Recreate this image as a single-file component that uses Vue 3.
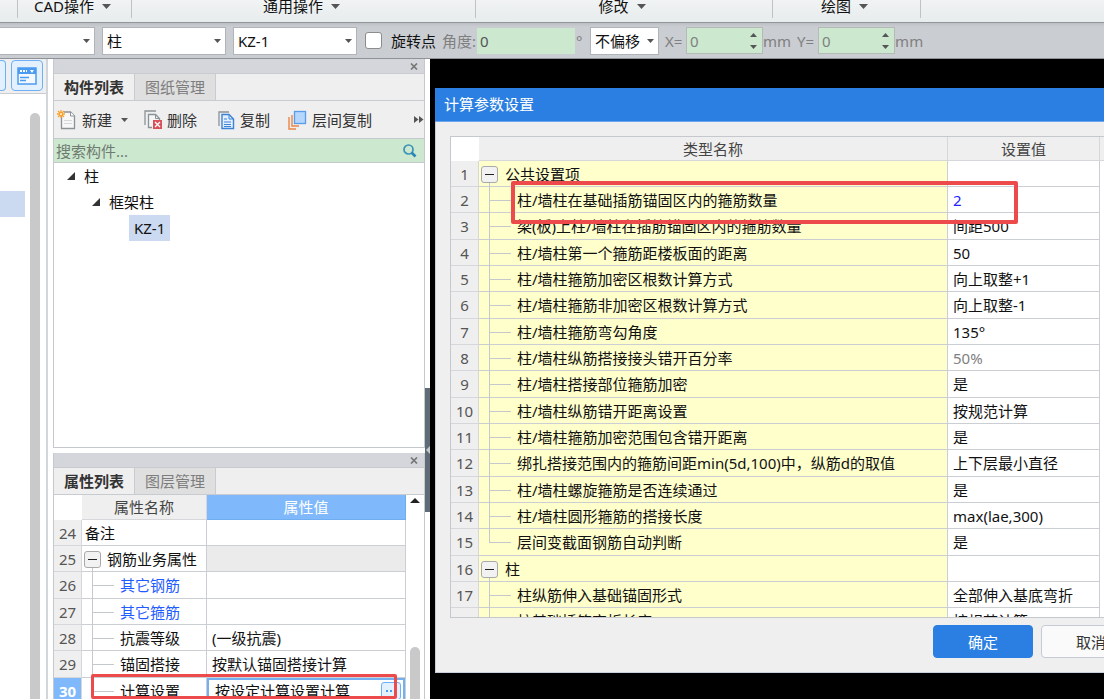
<script setup>
import { ref } from 'vue'

const groups = [
  { label: 'CAD操作', size: 'g-cad' },
  { label: '通用操作', size: 'g-common' },
  { label: '修改', size: 'g-edit' },
  { label: '绘图', size: 'g-draw' }
]

const rotate = ref(false)
const angle = ref('0')
const offsetX = ref('0')
const offsetY = ref('0')
const keyword = ref('')

const properties = [
  { no: 24, name: '备注', kind: 'plain', value: '' },
  { no: 25, name: '钢筋业务属性', kind: 'parent', value: '' },
  { no: 26, name: '其它钢筋', kind: 'child', link: true, value: '' },
  { no: 27, name: '其它箍筋', kind: 'child', link: true, value: '' },
  { no: 28, name: '抗震等级', kind: 'child', value: '(一级抗震)' },
  { no: 29, name: '锚固搭接', kind: 'child', value: '按默认锚固搭接计算' },
  { no: 30, name: '计算设置', kind: 'child', value: '按设定计算设置计算', selected: true }
]

const params = [
  { name: '公共设置项', kind: 'parent', value: '' },
  { name: '柱/墙柱在基础插筋锚固区内的箍筋数量', kind: 'child', value: '2', tone: 'changed' },
  { name: '梁(板)上柱/墙柱在插筋锚固区内的箍筋数量', kind: 'child', value: '间距500' },
  { name: '柱/墙柱第一个箍筋距楼板面的距离', kind: 'child', value: '50' },
  { name: '柱/墙柱箍筋加密区根数计算方式', kind: 'child', value: '向上取整+1' },
  { name: '柱/墙柱箍筋非加密区根数计算方式', kind: 'child', value: '向上取整-1' },
  { name: '柱/墙柱箍筋弯勾角度', kind: 'child', value: '135°' },
  { name: '柱/墙柱纵筋搭接接头错开百分率', kind: 'child', value: '50%', tone: 'muted' },
  { name: '柱/墙柱搭接部位箍筋加密', kind: 'child', value: '是' },
  { name: '柱/墙柱纵筋错开距离设置', kind: 'child', value: '按规范计算' },
  { name: '柱/墙柱箍筋加密范围包含错开距离', kind: 'child', value: '是' },
  { name: '绑扎搭接范围内的箍筋间距min(5d,100)中，纵筋d的取值', kind: 'child', value: '上下层最小直径' },
  { name: '柱/墙柱螺旋箍筋是否连续通过', kind: 'child', value: '是' },
  { name: '柱/墙柱圆形箍筋的搭接长度', kind: 'child', value: 'max(lae,300)' },
  { name: '层间变截面钢筋自动判断', kind: 'child', last: true, value: '是' },
  { name: '柱', kind: 'parent', value: '' },
  { name: '柱纵筋伸入基础锚固形式', kind: 'child', value: '全部伸入基底弯折' },
  { name: '柱基础插筋弯折长度', kind: 'child', value: '按规范计算' }
]
</script>

<template>
  <div class="app">
    <header class="ribbon">
      <div v-for="g in groups" :key="g.label" class="group" :class="g.size">
        <button type="button">
          {{ g.label }}
          <svg width="9" height="5" viewBox="0 0 9 5"><path d="M0 0h9L4.500 5z" fill="#555" /></svg>
        </button>
      </div>
    </header>

    <div class="options">
      <span class="select s-floor">
        <select aria-label="楼层"><option></option></select>
        <svg width="7" height="4" viewBox="0 0 7 4"><path d="M0 0h7L3.500 4z" fill="#555" /></svg>
      </span>
      <span class="select s-type">
        <select aria-label="构件类型"><option>柱</option></select>
        <svg width="7" height="4" viewBox="0 0 7 4"><path d="M0 0h7L3.500 4z" fill="#555" /></svg>
      </span>
      <span class="select s-type">
        <select aria-label="构件"><option>KZ-1</option></select>
        <svg width="7" height="4" viewBox="0 0 7 4"><path d="M0 0h7L3.500 4z" fill="#555" /></svg>
      </span>
      <label class="check"><input v-model="rotate" type="checkbox" />旋转点</label>
      <label class="field" for="angle">角度:</label>
      <input id="angle" v-model="angle" class="angle" type="text" />
      <span class="degree">°</span>
      <span class="select s-offset">
        <select aria-label="偏移方式"><option>不偏移</option></select>
        <svg width="7" height="4" viewBox="0 0 7 4"><path d="M0 0h7L3.500 4z" fill="#555" /></svg>
      </span>
      <label class="field x" for="ox">X=</label>
      <span class="spin">
        <input id="ox" v-model="offsetX" type="text" />
        <svg width="7" height="16" viewBox="0 0 7 16"><path d="M0 4h7L3.500 0zM0 12h7L3.500 16z" fill="#555" /></svg>
      </span>
      <span class="unit">mm</span>
      <label class="field y" for="oy">Y=</label>
      <span class="spin">
        <input id="oy" v-model="offsetY" type="text" />
        <svg width="7" height="16" viewBox="0 0 7 16"><path d="M0 4h7L3.500 0zM0 12h7L3.500 16z" fill="#555" /></svg>
      </span>
      <span class="unit">mm</span>
    </div>

    <main class="work">
      <aside class="strip">
        <div class="strip-tools">
          <button type="button" class="view-btn cut" aria-label="列表视图"></button>
          <button type="button" class="view-btn" aria-label="窗口视图">
            <svg width="20" height="18" viewBox="0 0 20 18">
              <rect x="1" y="1" width="18" height="16" fill="#f4f9ff" stroke="#4b9bf0" stroke-width="1.500" />
              <rect x="1" y="1" width="18" height="6" fill="#4b9bf0" />
              <path d="M3 3h2v2H3zM6 3h2v2H6zM9 3h1v2H9zM13 3h4l-2 3z" fill="#fff" />
              <path d="M3 10.500h9M3 13.500h6" stroke="#4b9bf0" stroke-width="1.500" />
            </svg>
          </button>
        </div>
        <div class="strip-body">
          <div class="strip-mark"></div>
          <div class="strip-scroll"></div>
        </div>
      </aside>

      <div class="docks">
        <section class="dock dock-list">
          <div class="dock-bar">
            <button type="button" aria-label="关闭">
              <svg width="8" height="7" viewBox="0 0 8 7"><path d="M1 0.500l6 6M7 0.500l-6 6" stroke="#777" stroke-width="1.700" /></svg>
            </button>
          </div>
          <nav class="tabs">
            <button type="button" class="on">构件列表</button>
            <button type="button">图纸管理</button>
          </nav>
          <div class="tools">
            <button type="button" class="t-new">
              <svg width="20" height="20" viewBox="0 0 20 20">
                <path d="M4.500 4v14.500h13V6l-4-4H7" fill="#f7f7f7" stroke="#8b9297" stroke-width="1.300" />
                <path d="M13.500 2v4h4" fill="#fff" stroke="#8b9297" />
                <path d="M7 10.500h8M7 13.500h8" stroke="#d8d8d8" />
                <path d="M4 0v8M0 4h8M1 1l6 6M7 1L1 7" stroke="#f6a12d" stroke-width="1.300" />
                <circle cx="4" cy="4" r="1" fill="#fff3d0" />
              </svg>新建
              <svg width="7" height="4" viewBox="0 0 7 4" class="drop"><path d="M0 0h7L3.500 4z" fill="#555" /></svg>
            </button>
            <button type="button" class="t-del">
              <svg width="18" height="20" viewBox="0 0 18 20">
                <path d="M1 15V1h11" fill="none" stroke="#8b9297" stroke-width="1.300" />
                <path d="M8 17.500H4.500v-13h7l4 4V10" fill="#f5f5f5" stroke="#8b9297" stroke-width="1.300" />
                <path d="M11.500 4.500v4h4" fill="none" stroke="#8b9297" />
                <rect x="9" y="10" width="9" height="9" fill="#d95058" />
                <path d="M11 12l5 5M16 12l-5 5" stroke="#fff" stroke-width="1.300" />
              </svg>删除
            </button>
            <button type="button" class="t-copy">
              <svg width="17" height="20" viewBox="0 0 17 20">
                <path d="M1 16V2h10" fill="none" stroke="#8b9297" stroke-width="1.300" />
                <path d="M4 4.500h7l4.500 4.500v9.500H4z" fill="#e4f0ff" stroke="#3b83d6" stroke-width="1.400" />
                <path d="M11 4.500V9h4.500M6 9h3M6 12h7M6 14.500h7M6 16.500h7" fill="none" stroke="#3b83d6" />
              </svg>复制
            </button>
            <button type="button" class="t-layer">
              <svg width="19" height="20" viewBox="0 0 19 20">
                <path d="M1 7v12h7" fill="none" stroke="#ec8746" stroke-width="1.400" />
                <path d="M4 5v11h7" fill="none" stroke="#ec8746" stroke-width="1.400" />
                <rect x="6.500" y="1.500" width="11" height="12" fill="#b5d6fd" stroke="#5b9ce8" stroke-width="1.300" />
              </svg>层间复制
            </button>
            <button type="button" class="t-more" aria-label="更多">
              <svg width="10" height="7" viewBox="0 0 10 7"><path d="M0 0l4.500 3.500L0 7zM5 0l4.500 3.500L5 7z" fill="#555" /></svg>
            </button>
          </div>
          <div class="search">
            <input v-model="keyword" type="text" placeholder="搜索构件..." aria-label="搜索构件" />
            <button type="button" aria-label="搜索">
              <svg width="14" height="14" viewBox="0 0 14 14">
                <circle cx="5.500" cy="5.500" r="4.500" fill="none" stroke="#3a93b8" stroke-width="1.700" />
                <path d="M8.500 8.500l4 4" stroke="#2a86b5" stroke-width="2.600" />
              </svg>
            </button>
          </div>
          <ul class="tree">
            <li class="d1"><svg width="8" height="8" viewBox="0 0 8 8"><path d="M8 0v8H0z" fill="#333" /></svg>柱</li>
            <li class="d2"><svg width="8" height="8" viewBox="0 0 8 8"><path d="M8 0v8H0z" fill="#333" /></svg>框架柱</li>
            <li class="d3"><span>KZ-1</span></li>
          </ul>
        </section>

        <section class="dock dock-props">
          <div class="dock-bar">
            <button type="button" aria-label="关闭">
              <svg width="8" height="7" viewBox="0 0 8 7"><path d="M1 0.500l6 6M7 0.500l-6 6" stroke="#777" stroke-width="1.700" /></svg>
            </button>
          </div>
          <nav class="tabs">
            <button type="button" class="on">属性列表</button>
            <button type="button">图层管理</button>
          </nav>
          <div class="props">
            <table class="grid">
              <colgroup><col class="c-no" /><col class="c-prop" /><col /></colgroup>
              <thead>
                <tr><th class="corner"></th><th>属性名称</th><th class="active">属性值</th></tr>
              </thead>
              <tbody>
                <tr v-for="p in properties" :key="p.no" :class="{ selected: p.selected }">
                  <th>{{ p.no }}</th>
                  <td :class="[p.kind, { link: p.link }]">
                    <button v-if="p.kind === 'parent'" type="button" class="fold" aria-label="折叠"></button>{{ p.name }}
                  </td>
                  <td class="value" :class="{ blank: p.kind === 'parent' }">
                    <div v-if="p.selected" class="editor">
                      {{ p.value }}<button type="button" aria-label="编辑"><svg width="10" height="2" viewBox="0 0 10 2"><path d="M0 0h2v2H0zM4 0h2v2H4zM8 0h2v2H8z" fill="#4b9bf0" /></svg></button>
                    </div>
                    <template v-else>{{ p.value }}</template>
                  </td>
                </tr>
              </tbody>
            </table>
            <div class="scroll">
              <svg width="10" height="5" viewBox="0 0 10 5"><path d="M0 5h10L5 0z" fill="#222" /></svg>
              <div class="thumb"></div>
            </div>
            <div class="mark mark-prop"></div>
          </div>
        </section>
      </div>

      <div class="splitter">
        <button type="button" aria-label="收起面板">
          <svg width="4" height="8" viewBox="0 0 4 8"><path d="M4 0v8L0 4z" fill="#c5cbd0" /></svg>
        </button>
      </div>

      <div class="canvas">
        <section class="dialog" role="dialog" aria-labelledby="dlg-title">
          <h1 id="dlg-title">计算参数设置</h1>
          <div class="dialog-body">
            <div class="sheet">
              <div class="sheet-clip">
                <table class="grid params">
                  <colgroup><col class="c-no" /><col /><col class="c-set" /><col class="c-rest" /></colgroup>
                  <thead>
                    <tr><th class="corner"></th><th>类型名称</th><th>设置值</th><th></th></tr>
                  </thead>
                  <tbody>
                    <tr v-for="(p, i) in params" :key="i">
                      <th>{{ i + 1 }}</th>
                      <td :class="[p.kind, { last: p.last }]">
                        <button v-if="p.kind === 'parent'" type="button" class="fold" aria-label="折叠"></button>{{ p.name }}
                      </td>
                      <td class="value" :class="p.tone">{{ p.value }}</td>
                      <td class="rest"></td>
                    </tr>
                  </tbody>
                </table>
              </div>
              <div class="mark mark-param"></div>
            </div>
            <footer>
              <button type="button" class="ok">确定</button>
              <button type="button" class="cancel">取消</button>
            </footer>
          </div>
        </section>
      </div>
    </main>
  </div>
</template>

<style>
html,
body {
  margin: 0;
  overflow: hidden;
}
</style>

<style scoped>
.app {
  display: flex;
  flex-direction: column;
  height: 100vh;
  overflow: hidden;
  background: #fff;
  color: #111;
  font: 15px/20px "Noto Sans", "Noto Sans CJK SC", sans-serif;
}
.app * { box-sizing: border-box; }
svg { display: block; flex: none; }
button, input, select { font: inherit; color: inherit; margin: 0; padding: 0; }
button { border: 0; background: none; white-space: nowrap; }

/* ribbon captions */
.ribbon {
  flex: none;
  display: flex;
  height: 23px;
  padding-left: 17px;
  background: linear-gradient(#f1f3f4, #e7ecec);
  border-bottom: 1px solid #92969b;
}
.group {
  display: flex;
  justify-content: center;
  align-items: flex-end;
  height: 18px;
  padding: 0 4px 2px 0;
  border-left: 1px solid #bfc3c6;
}
.group:last-child { border-right: 1px solid #bfc3c6; }
.group button { display: flex; align-items: center; gap: 8px; }
.g-cad { width: 114px; }
.g-common { width: 344px; }
.g-edit { width: 297px; }
.g-draw { width: 149px; }

/* option bar */
.options {
  flex: none;
  display: flex;
  align-items: center;
  height: 36px;
  border-bottom: 1px solid #8f9398;
  background: linear-gradient(#bcc0c5, #cacdd2 4px);
  white-space: nowrap;
}
.select { position: relative; flex: none; height: 28px; margin-right: 7px; }
.select select {
  appearance: none;
  width: 100%;
  height: 100%;
  padding: 0 4px;
  border: 1px solid #b0b3b7;
  border-radius: 0;
  background: #fff;
  color: #111;
}
.select svg { position: absolute; right: 5px; top: 12px; pointer-events: none; }
.s-floor { width: 95px; }
.s-floor select { border-left: 0; }
.s-type { width: 124px; }
.s-offset { width: 69px; margin-right: 6px; }
.check { display: flex; align-items: center; gap: 9px; margin-left: 1px; }
.check input {
  appearance: none;
  width: 17px;
  height: 17px;
  border: 1px solid #8c8c8c;
  border-radius: 3px;
  background: #fff;
}
.field { margin-left: 6px; color: #808080; }
.field.x { margin-left: 0; width: 21px; }
.field.y { width: 21px; }
.angle {
  width: 98px;
  height: 26px;
  margin-left: 1px;
  padding: 0 3px;
  border: 0;
  background: #cce8cf;
  color: #555;
}
.degree { width: 15px; padding-left: 1px; color: #808080; }
.spin { position: relative; flex: none; width: 77px; height: 27px; }
.spin input {
  width: 100%;
  height: 100%;
  padding: 0 3px;
  border: 1px solid #b4bab5;
  background: #cce8cf;
  color: #808080;
}
.spin svg { position: absolute; right: 6px; top: 6px; }
.unit { color: #808080; }

/* work area */
.work { flex: 1; display: flex; min-height: 0; }
.strip {
  flex: none;
  display: flex;
  flex-direction: column;
  width: 48px;
  border-right: 2px solid #d2d5d9;
}
.strip-tools {
  display: flex;
  gap: 5px;
  height: 35px;
  padding-top: 1px;
  background: #efefef;
  border-bottom: 1px solid #c9cdd1;
}
.view-btn {
  display: flex;
  align-items: center;
  justify-content: center;
  width: 32px;
  height: 31px;
  border: 1px solid #6eb0f5;
  border-radius: 4px;
  background: #e3f0fe;
}
.view-btn.cut { width: 6px; border-left: 0; border-radius: 0 4px 4px 0; }
.strip-body { flex: 1; display: flex; gap: 5px; }
.strip-mark { width: 25px; height: 26px; margin-top: 97px; background: #cbdaf0; }
.strip-scroll { width: 10px; margin-top: 19px; border-radius: 5px 5px 0 0; background: #c9c9c9; }

.docks {
  flex: none;
  display: flex;
  flex-direction: column;
  gap: 5px;
  width: 372px;
  margin-left: 5px;
}
.dock { display: flex; flex-direction: column; min-height: 0; border: 1px solid #c5c9cd; border-top: 0; }
.dock-list { flex: 389; }
.dock-props { flex: 246; border-bottom: 0; }
.dock-bar {
  flex: none;
  display: flex;
  align-items: center;
  justify-content: flex-end;
  height: 15px;
  padding-right: 6px;
  background: #d5d6db;
  border-bottom: 1px solid #c8cbd0;
}
.tabs {
  flex: none;
  display: flex;
  height: 27px;
  background: #efefef;
  border-bottom: 1px solid #c8cbd0;
}
.tabs button { width: 81px; border-right: 1px solid #c8cbd0; background: #dfdfdf; color: #7d7d7d; }
.tabs .on { background: #efefef; color: #333; font-weight: bold; }
.tools {
  flex: none;
  display: flex;
  align-items: center;
  height: 37px;
  padding-left: 3px;
  background: #efefef;
  color: #333;
}
.tools button { display: flex; align-items: center; gap: 5px; }
.t-new .drop { margin-left: 4px; }
.t-del { margin-left: 16px; }
.t-copy { margin-left: 21px; }
.t-layer { margin-left: 18px; }
.tools .t-more { margin-left: auto; }
.search {
  flex: none;
  display: flex;
  align-items: center;
  height: 25px;
  padding-right: 7px;
  background: #cce8cf;
  border: solid #c5c9cd;
  border-width: 1px 0;
}
.search input { flex: 1; min-width: 0; padding: 0 2px; border: 0; background: none; }
.search input::placeholder { color: #6f7a70; opacity: 1; }
.tree { margin: 0; padding: 0; list-style: none; }
.tree li { display: flex; align-items: center; gap: 9px; height: 26px; }
.tree .d1 { padding-left: 13px; }
.tree .d2 { padding-left: 38px; }
.tree .d3 { padding-left: 75px; }
.tree span { padding: 3px 5px; background: #cbdaf0; }

/* data grids */
.grid { width: 100%; table-layout: fixed; border-collapse: separate; border-spacing: 0; }
.grid thead th {
  height: 25px;
  padding: 0;
  border: solid #d5d7da;
  border-width: 0 1px 1px 0;
  background: #efefef;
  color: #444;
  font-weight: normal;
}
.grid thead .corner { border-color: #fff; background: #fff; }
.grid thead .active { border-color: #6eaef0; background: #7fb9fb; color: #fff; }
.grid tbody tr { height: 26px; }
.grid tbody tr:nth-child(3n) { height: 27px; }
.grid tbody th {
  padding: 0;
  border: solid #d5d7da;
  border-width: 0 1px 1px 0;
  background: #efefef;
  color: #555;
  font-weight: normal;
}
.grid td {
  position: relative;
  padding: 0 0 0 3px;
  border: solid #cbced2;
  border-width: 0 1px 1px 0;
  white-space: nowrap;
}
.c-no { width: 28px; }
.c-prop { width: 125px; }
.c-set { width: 152px; }
.c-rest { width: 40px; }
.grid td.parent { padding-left: 25px; }
.grid td.child { padding-left: 38px; }
.grid td.value { padding-left: 5px; }
.fold {
  position: absolute;
  z-index: 1;
  left: 2px;
  top: 5px;
  width: 17px;
  height: 17px;
  border: 1px solid #a9a9a9;
  border-radius: 3px;
  background: #f2f2f2;
}
.fold::before {
  content: "";
  position: absolute;
  left: 3px;
  right: 3px;
  top: 7px;
  height: 1px;
  background: #222;
}
.parent::before,
.child::before {
  content: "";
  position: absolute;
  left: 10px;
  top: 0;
  bottom: -1px;
  width: 1px;
  background: #c6c9cc;
}
.parent::before { top: 22px; }
.child.last::before { bottom: 12px; }
.child::after {
  content: "";
  position: absolute;
  left: 11px;
  top: 13px;
  width: 21px;
  height: 1px;
  background: #c6c9cc;
}

.props { position: relative; flex: 1; display: flex; align-items: flex-start; min-height: 0; overflow: hidden; }
.props .grid { flex: 1; }
.grid td.link { color: #1f5bff; }
.grid td.blank { background: #ebebeb; }
.grid .selected th { background: #7fb9fb; color: #fff; font-weight: bold; }
.grid .selected .value { padding: 0; }
.editor {
  display: flex;
  align-items: center;
  justify-content: space-between;
  height: 26px;
  padding: 0 2px 0 6px;
  border: 2px solid #74aff0;
}
.editor button {
  display: flex;
  align-items: center;
  justify-content: center;
  width: 20px;
  height: 18px;
  border: 1px solid #6eb0f5;
  border-radius: 3px;
  background: #e3f0fe;
}
.scroll {
  flex: none;
  align-self: stretch;
  display: flex;
  flex-direction: column;
  align-items: center;
  width: 18px;
  padding-top: 3px;
}
.thumb { flex: 1; width: 10px; margin-top: 144px; border-radius: 5px 5px 0 0; background: #c9c9c9; }
.mark { position: absolute; z-index: 2; border: 3px solid #ed4b4b; border-radius: 2px; pointer-events: none; }
.mark-prop { left: 37px; right: 27px; top: 179px; height: 25px; }

.splitter { flex: none; width: 5px; padding-top: 329px; background: #fff; }
.splitter button { display: flex; align-items: center; justify-content: flex-end; width: 5px; height: 124px; background: #5f6c77; }

/* canvas with the dialog running past the right edge */
.canvas { flex: 1; display: flex; min-width: 0; padding: 29px 0 26px 5px; background: #000; overflow: hidden; }
.dialog { flex: 1; display: flex; flex-direction: column; min-width: 0; margin-right: -52px; background: #efefef; }
.dialog h1 {
  flex: none;
  margin: 0;
  padding: 6px 9px 7px;
  border-bottom: 1px solid #6ba6ee;
  background: #2c7fe2;
  color: #fff;
  font-size: 15px;
  line-height: 20px;
  font-weight: normal;
}
.dialog-body {
  flex: 1;
  display: flex;
  flex-direction: column;
  min-height: 0;
  padding: 14px 15px;
  border: solid #c7d0dc;
  border-width: 0 0 1px 1px;
}
.sheet { position: relative; flex: 1; min-height: 0; margin-left: -1px; border: 1px solid #c5c9cd; background: #fff; }
.sheet-clip { height: 100%; overflow: hidden; }
.params thead th { height: 24px; }
.params td.parent,
.params td.child { background: #ffffcc; }
.grid.params td.parent { padding-left: 26px; }
.grid td.changed { color: #2222ff; }
.grid td.muted { color: #808080; }
.grid td.rest { border: 0; }
.mark-param { left: 60px; right: 122px; top: 44px; height: 43px; border-width: 4px; }
footer { flex: none; display: flex; justify-content: flex-end; gap: 8px; padding-top: 7px; }
footer button { width: 100px; height: 33px; border: 1px solid #2c7fe2; border-radius: 4px; }
footer .ok { background: #2c7fe2; color: #fff; }
footer .cancel { border-color: #c5cad6; background: #fafafa; color: #333; }
</style>
